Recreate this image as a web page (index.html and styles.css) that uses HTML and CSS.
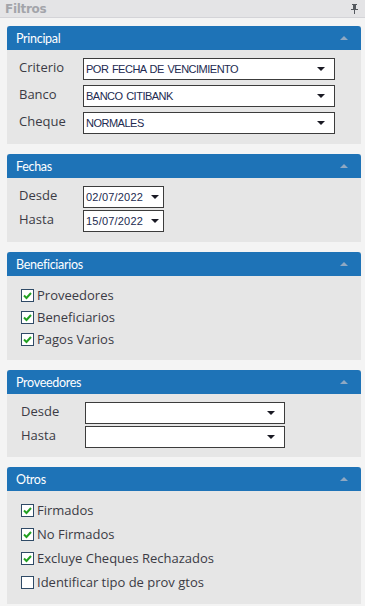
FILE: index.html
```html
<!DOCTYPE html>
<html lang="es">
<head>
    <meta charset="UTF-8">
    <meta name="viewport" content="width=device-width, initial-scale=1.0">
    <title>Filtros</title>
    <link rel="stylesheet" href="styles.css">
</head>
<body>
    <div class="barra">
        <span class="barra-titulo">Filtros</span>
        <svg class="pin" width="9" height="10" viewBox="0 0 9 10">
            <path d="M2 0h5v1H6v4h2v1H5v4H4V6H1V5h2V1H2z" fill="#55595f"/>
        </svg>
    </div>

    <section class="panel">
        <div class="panel-cab">
            <span>Principal</span>
            <span class="caret"></span>
        </div>
        <div class="panel-cuerpo campos">
            <div class="fila">
                <label>Criterio</label>
                <div class="combo ancho">POR FECHA DE VENCIMIENTO<span class="flecha"></span></div>
            </div>
            <div class="fila">
                <label>Banco</label>
                <div class="combo ancho">BANCO CITIBANK<span class="flecha"></span></div>
            </div>
            <div class="fila">
                <label>Cheque</label>
                <div class="combo ancho">NORMALES<span class="flecha"></span></div>
            </div>
        </div>
    </section>

    <section class="panel">
        <div class="panel-cab">
            <span>Fechas</span>
            <span class="caret"></span>
        </div>
        <div class="panel-cuerpo campos juntos">
            <div class="fila">
                <label>Desde</label>
                <div class="combo fecha">02/07/2022<span class="flecha"></span></div>
            </div>
            <div class="fila">
                <label>Hasta</label>
                <div class="combo fecha">15/07/2022<span class="flecha"></span></div>
            </div>
        </div>
    </section>

    <section class="panel">
        <div class="panel-cab">
            <span>Beneficiarios</span>
            <span class="caret"></span>
        </div>
        <div class="panel-cuerpo checks">
            <div class="check si">Proveedores</div>
            <div class="check si">Beneficiarios</div>
            <div class="check si">Pagos Varios</div>
        </div>
    </section>

    <section class="panel">
        <div class="panel-cab">
            <span>Proveedores</span>
            <span class="caret"></span>
        </div>
        <div class="panel-cuerpo campos juntos prov">
            <div class="fila">
                <label>Desde</label>
                <div class="combo medio"><span class="flecha"></span></div>
            </div>
            <div class="fila">
                <label>Hasta</label>
                <div class="combo medio"><span class="flecha"></span></div>
            </div>
        </div>
    </section>

    <section class="panel">
        <div class="panel-cab">
            <span>Otros</span>
            <span class="caret"></span>
        </div>
        <div class="panel-cuerpo checks otros">
            <div class="check si">Firmados</div>
            <div class="check si">No Firmados</div>
            <div class="check si">Excluye Cheques Rechazados</div>
            <div class="check">Identificar tipo de prov gtos</div>
        </div>
    </section>
</body>
</html>
```
FILE: styles.css
```css
body {
    font-family: "Open Sans", sans-serif;
    background-color: #f4f4f4;
    color: #333;
    margin: 0;
    padding: 0;
    width: 365px;
    height: 606px;
    overflow: hidden;
}
.barra {
    height: 18px;
    background-color: #e4e4e6;
    border-bottom: 1px solid #d4d4d8;
    display: flex;
    justify-content: space-between;
    align-items: center;
    padding: 0 6px 0 5px;
    box-sizing: border-box;
}
.barra-titulo {
    font-family: "DejaVu Sans", sans-serif;
    font-weight: bold;
    font-size: 12px;
    letter-spacing: -0.3px;
    color: #a3a4aa;
}
.panel {
    margin: 8px 4px 0 7px;
    background-color: #e6e6e6;
}
.panel + .panel {
    margin-top: 10px;
}
.panel-cab {
    height: 24px;
    background-color: #1e73b7;
    border-radius: 3px 3px 0 0;
    color: #fff;
    font-family: "Lato", sans-serif;
    font-size: 12.5px;
    letter-spacing: -0.3px;
    display: flex;
    justify-content: space-between;
    align-items: center;
    padding: 0 13px 0 9px;
}
.caret {
    width: 0;
    height: 0;
    border-left: 4px solid transparent;
    border-right: 4px solid transparent;
    border-bottom: 4px solid #8fa8c2;
}
.panel-cuerpo {
    padding: 8px 0 10px 12px;
}
.campos {
    display: flex;
    flex-direction: column;
    gap: 5px;
}
.campos.juntos {
    gap: 2px;
}
.prov {
    padding: 8px 0 9px 14px;
}
.fila {
    display: flex;
    align-items: center;
}
.fila label {
    width: 64px;
    font-size: 13px;
    color: #3b3b45;
    margin-top: -4px;
}
.combo {
    height: 22px;
    box-sizing: border-box;
    border: 1px solid #3c3c3c;
    background-color: #fff;
    font-family: "Liberation Sans", sans-serif;
    font-size: 11px;
    letter-spacing: -0.5px;
    word-spacing: 1px;
    color: #222a50;
    display: flex;
    align-items: center;
    justify-content: space-between;
    padding: 0 9px 0 2px;
}
.ancho {
    width: 252px;
}
.fecha {
    width: 81px;
    letter-spacing: 0.2px;
    padding-right: 4px;
}
.medio {
    width: 200px;
    justify-content: flex-end;
    padding-right: 9px;
}
.flecha {
    width: 0;
    height: 0;
    border-left: 4px solid transparent;
    border-right: 4px solid transparent;
    border-top: 4px solid #1a1a24;
}
.checks {
    padding: 8px 0 10px 14px;
}
.otros {
    padding: 7px 0 10px 14px;
}
.check {
    height: 22px;
    display: flex;
    align-items: center;
    font-size: 13px;
    color: #3b3b45;
}
.otros .check {
    height: 24px;
}
.check::before {
    content: "";
    width: 11px;
    height: 11px;
    border: 1px solid #2f4a66;
    background-color: #fff;
    margin-right: 3px;
    flex-shrink: 0;
}
.check.si::before {
    background: #fff url("data:image/svg+xml;utf8,<svg xmlns='http://www.w3.org/2000/svg' width='11' height='11'><path d='M2 5.5l2.5 2.5L9 3' stroke='%2322a022' stroke-width='2' fill='none'/></svg>") no-repeat center;
}
```
